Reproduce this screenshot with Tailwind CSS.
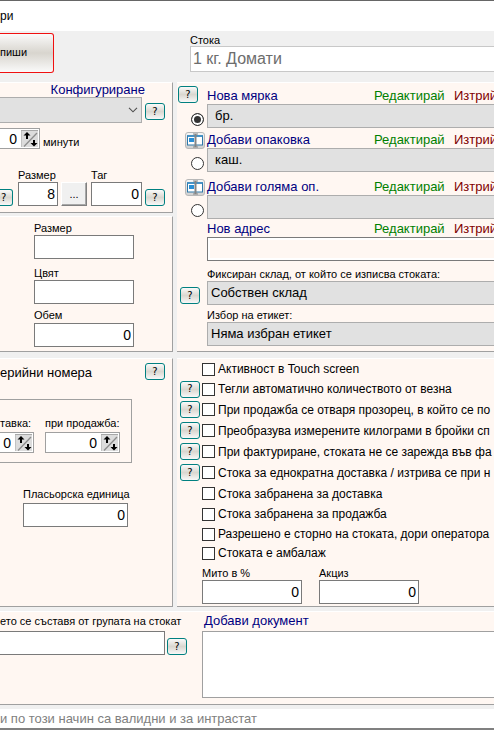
<!DOCTYPE html>
<html lang="bg">
<head>
<meta charset="utf-8">
<title>Стока</title>
<script src="https://cdn.jsdelivr.net/npm/@tailwindcss/browser@4"></script>
</head>
<body class="min-h-screen overflow-x-hidden whitespace-nowrap bg-[#f0f0f0] font-['Liberation_Sans',Arial,sans-serif] text-[13px] leading-4 text-black">
<svg class="hidden">
  <symbol id="rename" viewBox="0 0 20 17">
    <rect x="2.500" y="4" width="15" height="9" fill="#fff" stroke="#2f78a8"/>
    <path d="M2 4h16" stroke="#2f86c0" stroke-width="1.500"/>
    <rect x="4" y="6" width="5" height="4" fill="#2a8fd6"/>
    <path d="M10.500 2v13" stroke="#858585" stroke-width="2"/>
    <path d="M8 2h5M8 15h5" stroke="#858585"/>
  </symbol>
  <symbol id="spin" viewBox="0 0 17 17">
    <rect width="17" height="17" fill="#dcdcdc"/>
    <path d="M0 17V.5h17" fill="none" stroke="#a8a8a8"/>
    <path d="M3 16.500L16 3" stroke="#8c8c8c" stroke-width="1.300"/>
    <path d="M6 2l3.500 3.500H7V9H5V5.500H2.500z" fill="#000"/>
    <path d="M12 10h2v3h2.500L13 16.500 9.500 13H12z" fill="#000"/>
  </symbol>
</svg>

<header class="flex h-[31px] items-center border-t border-[#666] bg-white text-xs"><h1>ри</h1></header>

<div class="flex h-[51px] items-start pt-[2px]">
  <button class="h-10 w-[54px] rounded-r-[3px] border border-l-0 border-[#f01010] bg-linear-to-b from-[#fafafa] via-[#d8d5ce] to-[#fafafa] pb-[2px] text-left text-[11px]">пиши</button>
  <div class="ml-[136px] -mr-2 flex grow flex-col">
    <label for="item" class="h-[13px] text-[11px] leading-[14px]">Стока</label>
    <input id="item" value="1 кг. Домати" class="h-[26px] w-full border border-[#c8c8c8] bg-white pl-[2px] text-base text-[#6d6d6d]">
  </div>
</div>

<main>
  <div class="flex gap-1">
    <div class="flex w-[173px] shrink-0 flex-col">
      <section class="h-[131px] border-t border-r border-b border-t-white border-r-[#a0a0a0] border-b-[#a0a0a0] bg-[#fff7f2]">
        <a href="#" class="block h-[14px] pr-[27px] text-right leading-[14px] text-[#000080]">Конфигуриране</a>
        <div class="flex items-end gap-[3px]">
          <div class="relative h-[26px] w-[142px]">
            <select aria-label="Конфигуриране" class="h-full w-full appearance-none border border-l-0 border-[#adadad] bg-[#e1e1e1]"><option></option></select>
            <svg class="pointer-events-none absolute top-[10px] right-[4px] h-[6px] w-[10px]" viewBox="0 0 10 6"><path d="M1 .8l4 4 4-4" fill="none" stroke="#505050" stroke-width="1.100"/></svg>
          </div>
          <button class="mb-[3px] h-[17px] w-5 rounded-[3px] border border-[#008080] bg-linear-to-b from-[#fafafa] via-[#dad7d0] to-[#f8f8f8] font-['DejaVu_Sans',sans-serif] text-[10px] leading-[14px]">?</button>
        </div>
        <div class="flex items-end gap-[3px] pt-[5px]">
          <div class="flex h-[21px] w-10 items-center border border-l-0 border-[#a0a0a0] bg-white pr-px">
            <input id="minutes" value="0" class="w-0 grow pr-1 text-right text-sm"><svg class="size-[17px]"><use href="#spin"/></svg>
          </div>
          <label for="minutes" class="h-[14px] text-[11px] leading-[14px]">минути</label>
        </div>
        <div class="flex items-end pt-[19px]">
          <button class="h-[17px] w-[13px] rounded-r-[3px] border border-l-0 border-[#008080] bg-linear-to-b from-[#fafafa] via-[#dad7d0] to-[#f8f8f8] pl-px text-left font-['DejaVu_Sans',sans-serif] text-[10px] leading-[14px]">?</button>
          <div class="ml-[5px] flex w-10 flex-col">
            <label for="size1" class="h-[14px] text-[11px] leading-[14px]">Размер</label>
            <input id="size1" value="8" class="h-6 w-full border border-[#7a7a7a] bg-white pr-[2px] text-right text-sm">
          </div>
          <button aria-label="Избор" class="ml-[3px] h-6 w-[26px] border border-t-white border-r-[#808080] border-b-[#808080] border-l-white bg-[#f0f0f0] text-[11px] shadow-[inset_-1px_-1px_0_#a8a8a8]">...</button>
          <div class="ml-1 flex w-[51px] flex-col">
            <label for="tag" class="h-[14px] text-[11px] leading-[14px]">Таг</label>
            <input id="tag" value="0" class="h-6 w-full border border-[#7a7a7a] bg-white pr-[2px] text-right text-sm">
          </div>
          <button class="ml-[3px] h-[17px] w-5 rounded-[3px] border border-[#008080] bg-linear-to-b from-[#fafafa] via-[#dad7d0] to-[#f8f8f8] font-['DejaVu_Sans',sans-serif] text-[10px] leading-[14px]">?</button>
        </div>
      </section>

      <section class="mt-[3px] flex h-[136px] flex-col border-t border-r border-b border-t-white border-r-[#a0a0a0] border-b-[#a0a0a0] bg-[#fff7f2] pt-1 pl-[34px]">
        <label for="size2" class="h-[14px] text-[11px] leading-[14px]">Размер</label>
        <input id="size2" class="h-6 w-[100px] border border-[#7a7a7a] bg-white pr-[2px] text-right text-sm">
        <label for="color" class="mt-[7px] h-[14px] text-[11px] leading-[14px]">Цвят</label>
        <input id="color" class="h-6 w-[100px] border border-[#7a7a7a] bg-white pr-[2px] text-right text-sm">
        <label for="volume" class="mt-1 h-[15px] text-[11px] leading-[14px]">Обем</label>
        <input id="volume" value="0" class="h-6 w-[100px] border border-[#7a7a7a] bg-white pr-[2px] text-right text-sm">
      </section>

      <section class="mt-[6px] h-[249px] border-t border-r border-b border-t-white border-r-[#a0a0a0] border-b-[#a0a0a0] bg-[#fff7f2] pt-1">
        <div class="flex justify-between pr-[7px]">
          <h2 class="pt-[2px]">ерийни номера</h2>
          <button class="h-[17px] w-5 rounded-[3px] border border-[#008080] bg-linear-to-b from-[#fafafa] via-[#dad7d0] to-[#f8f8f8] font-['DejaVu_Sans',sans-serif] text-[10px] leading-[14px]">?</button>
        </div>
        <div class="mt-[18px] flex h-16 w-[132px] gap-[11px] border border-l-0 border-[#a0a0a0] pt-[15px]">
          <div class="flex w-[34px] flex-col">
            <label for="delivery" class="h-[17px] text-[11px] leading-[16px]">тавка:</label>
            <div class="flex h-[21px] items-center border border-l-0 border-[#a0a0a0] bg-white pr-px">
              <input id="delivery" value="0" class="w-0 grow pr-1 text-right text-sm"><svg class="size-[17px]"><use href="#spin"/></svg>
            </div>
          </div>
          <div class="flex w-[75px] flex-col">
            <label for="sale" class="h-[17px] text-[11px] leading-[16px]">при продажба:</label>
            <div class="flex h-[21px] items-center border border-[#a0a0a0] bg-white pr-px">
              <input id="sale" value="0" class="w-0 grow pr-1 text-right text-sm"><svg class="size-[17px]"><use href="#spin"/></svg>
            </div>
          </div>
        </div>
        <div class="mt-6 ml-[23px] flex w-[105px] flex-col">
          <label for="unit" class="h-4 text-[11px] leading-[14px]">Пласьорска единица</label>
          <input id="unit" value="0" class="h-6 w-full border border-[#7a7a7a] bg-white pr-[2px] text-right text-sm">
        </div>
      </section>
    </div>

    <div class="flex min-w-0 grow flex-col overflow-hidden">
      <section class="-mr-2 h-[270px] border-t border-b border-t-white border-b-[#a0a0a0] bg-[#fff7f2] pt-[3px]">
        <div class="flex h-[42px]">
          <div class="w-[30px] shrink-0 pl-px">
            <button class="block h-[17px] w-5 rounded-[3px] border border-[#008080] bg-linear-to-b from-[#fafafa] via-[#dad7d0] to-[#f8f8f8] font-['DejaVu_Sans',sans-serif] text-[10px] leading-[14px]">?</button>
            <input type="radio" name="unit" checked aria-label="Мярка" class="mt-[10px] ml-[13px] block size-[13px] appearance-none rounded-full border border-[#333] bg-white checked:bg-[#333] checked:shadow-[inset_0_0_0_2px_#fff]">
          </div>
          <div class="grow">
            <div class="flex h-[18px] items-center pt-px"><a href="#" class="w-[167px] text-[#000080]">Нова мярка</a><a href="#" class="w-20 text-[#008000]">Редактирай</a><a href="#" class="text-[#800000]">Изтрий</a></div>
            <select aria-label="Мярка" class="block h-6 w-full appearance-none border border-[#adadad] bg-[#e1e1e1] pl-[7px]"><option>бр.</option></select>
          </div>
        </div>
        <div class="mt-[2px] flex h-[42px]">
          <div class="w-[30px] shrink-0 pt-[2px] pl-2">
            <button aria-label="Преименувай опаковка" class="block h-[17px] w-5 rounded-[3px] border border-[#b8b8b8] bg-linear-to-b from-[#f6f6f6] to-[#d0d0d0]"><svg class="-m-px h-[17px] w-5"><use href="#rename"/></svg></button>
            <input type="radio" name="unit" aria-label="Опаковка" class="mt-2 ml-[6px] block size-[13px] appearance-none rounded-full border border-[#333] bg-white checked:bg-[#333] checked:shadow-[inset_0_0_0_2px_#fff]">
          </div>
          <div class="grow">
            <div class="flex h-[18px] items-center pt-px"><a href="#" class="w-[167px] text-[#000080]">Добави опаковка</a><a href="#" class="w-20 text-[#008000]">Редактирай</a><a href="#" class="text-[#800000]">Изтрий</a></div>
            <select aria-label="Опаковка" class="block h-6 w-full appearance-none border border-[#adadad] bg-[#e1e1e1] pl-[7px]"><option>каш.</option></select>
          </div>
        </div>
        <div class="mt-[5px] flex h-[42px]">
          <div class="w-[30px] shrink-0 pt-[2px] pl-2">
            <button aria-label="Преименувай голяма опаковка" class="block h-[17px] w-5 rounded-[3px] border border-[#b8b8b8] bg-linear-to-b from-[#f6f6f6] to-[#d0d0d0]"><svg class="-m-px h-[17px] w-5"><use href="#rename"/></svg></button>
            <input type="radio" name="unit" aria-label="Голяма опаковка" class="mt-2 ml-[6px] block size-[13px] appearance-none rounded-full border border-[#333] bg-white checked:bg-[#333] checked:shadow-[inset_0_0_0_2px_#fff]">
          </div>
          <div class="grow">
            <div class="flex h-[18px] items-center pt-px"><a href="#" class="w-[167px] text-[#000080]">Добави голяма оп.</a><a href="#" class="w-20 text-[#008000]">Редактирай</a><a href="#" class="text-[#800000]">Изтрий</a></div>
            <select aria-label="Голяма опаковка" class="block h-6 w-full appearance-none border border-[#adadad] bg-[#e1e1e1] pl-[7px]"><option></option></select>
          </div>
        </div>
        <div class="h-[42px] pl-[30px]">
          <div class="flex h-[18px] items-center pt-px"><a href="#" class="w-[167px] text-[#000080]">Нов адрес</a><a href="#" class="w-20 text-[#008000]">Редактирай</a><a href="#" class="text-[#800000]">Изтрий</a></div>
          <input aria-label="Адрес" class="block h-6 w-full border border-[#7a7a7a] bg-[#fff7f2] shadow-[inset_0_0_0_2px_#fff]">
        </div>
        <div class="mt-[6px] flex items-end">
          <div class="w-[30px] shrink-0 pb-px pl-[3px]">
            <button class="block h-[17px] w-5 rounded-[3px] border border-[#008080] bg-linear-to-b from-[#fafafa] via-[#dad7d0] to-[#f8f8f8] font-['DejaVu_Sans',sans-serif] text-[10px] leading-[14px]">?</button>
          </div>
          <div class="flex grow flex-col">
            <label for="store" class="h-[14px] text-[11px] leading-[14px]">Фиксиран склад, от който се изписва стоката:</label>
            <select id="store" class="h-6 w-full appearance-none border border-[#adadad] bg-[#e1e1e1] pl-[3px]"><option>Собствен склад</option></select>
          </div>
        </div>
        <div class="mt-[3px] flex flex-col pl-[30px]">
          <label for="etiket" class="h-[14px] text-[11px] leading-[14px]">Избор на етикет:</label>
          <select id="etiket" class="h-6 w-full appearance-none border border-[#adadad] bg-[#e1e1e1] pl-[3px]"><option>Няма избран етикет</option></select>
        </div>
      </section>

      <section class="mt-[6px] h-[249px] border-t border-b border-t-white border-b-[#a0a0a0] bg-[#fff7f2] pl-[3px] text-xs">
        <div class="flex h-5 items-center pl-[22px]">
          <label class="flex items-center gap-[3px]"><input type="checkbox" class="size-[13px] appearance-none border border-[#333] bg-white checked:bg-[#333]">Активност в Touch screen</label>
        </div>
        <div class="flex h-5 items-center gap-[2px]">
          <button class="h-[17px] w-5 shrink-0 rounded-[3px] border border-[#008080] bg-linear-to-b from-[#fafafa] via-[#dad7d0] to-[#f8f8f8] font-['DejaVu_Sans',sans-serif] text-[10px] leading-[14px]">?</button>
          <label class="flex items-center gap-[3px]"><input type="checkbox" class="size-[13px] appearance-none border border-[#333] bg-white checked:bg-[#333]">Тегли автоматично количеството от везна</label>
        </div>
        <div class="flex h-[21px] items-center gap-[2px]">
          <button class="h-[17px] w-5 shrink-0 rounded-[3px] border border-[#008080] bg-linear-to-b from-[#fafafa] via-[#dad7d0] to-[#f8f8f8] font-['DejaVu_Sans',sans-serif] text-[10px] leading-[14px]">?</button>
          <label class="flex items-center gap-[3px]"><input type="checkbox" class="size-[13px] appearance-none border border-[#333] bg-white checked:bg-[#333]">При продажба се отваря прозорец, в който се по</label>
        </div>
        <div class="flex h-[21px] items-center gap-[2px]">
          <button class="h-[17px] w-5 shrink-0 rounded-[3px] border border-[#008080] bg-linear-to-b from-[#fafafa] via-[#dad7d0] to-[#f8f8f8] font-['DejaVu_Sans',sans-serif] text-[10px] leading-[14px]">?</button>
          <label class="flex items-center gap-[3px]"><input type="checkbox" class="size-[13px] appearance-none border border-[#333] bg-white checked:bg-[#333]">Преобразува измерените килограми в бройки сп</label>
        </div>
        <div class="flex h-[21px] items-center gap-[2px]">
          <button class="h-[17px] w-5 shrink-0 rounded-[3px] border border-[#008080] bg-linear-to-b from-[#fafafa] via-[#dad7d0] to-[#f8f8f8] font-['DejaVu_Sans',sans-serif] text-[10px] leading-[14px]">?</button>
          <label class="flex items-center gap-[3px]"><input type="checkbox" class="size-[13px] appearance-none border border-[#333] bg-white checked:bg-[#333]">При фактуриране, стоката не се зарежда във фа</label>
        </div>
        <div class="flex h-[21px] items-center gap-[2px]">
          <button class="h-[17px] w-5 shrink-0 rounded-[3px] border border-[#008080] bg-linear-to-b from-[#fafafa] via-[#dad7d0] to-[#f8f8f8] font-['DejaVu_Sans',sans-serif] text-[10px] leading-[14px]">?</button>
          <label class="flex items-center gap-[3px]"><input type="checkbox" class="size-[13px] appearance-none border border-[#333] bg-white checked:bg-[#333]">Стока за еднократна доставка / изтрива се при н</label>
        </div>
        <div class="flex h-[21px] items-center pl-[22px]">
          <label class="flex items-center gap-[3px]"><input type="checkbox" class="size-[13px] appearance-none border border-[#333] bg-white checked:bg-[#333]">Стока забранена за доставка</label>
        </div>
        <div class="flex h-5 items-center pl-[22px]">
          <label class="flex items-center gap-[3px]"><input type="checkbox" class="size-[13px] appearance-none border border-[#333] bg-white checked:bg-[#333]">Стока забранена за продажба</label>
        </div>
        <div class="flex h-5 items-center pl-[22px]">
          <label class="flex items-center gap-[3px]"><input type="checkbox" class="size-[13px] appearance-none border border-[#333] bg-white checked:bg-[#333]">Разрешено е сторно на стоката, дори оператора</label>
        </div>
        <div class="flex h-[18px] items-center pl-[22px]">
          <label class="flex items-center gap-[3px]"><input type="checkbox" class="size-[13px] appearance-none border border-[#333] bg-white checked:bg-[#333]">Стоката е амбалаж</label>
        </div>
        <div class="flex gap-[17px] pt-1 pl-[22px]">
          <div class="flex w-[100px] flex-col">
            <label for="duty" class="h-[14px] text-[11px] leading-[14px]">Мито в %</label>
            <input id="duty" value="0" class="h-6 w-full border border-[#7a7a7a] bg-white pr-[2px] text-right text-sm">
          </div>
          <div class="flex w-[100px] flex-col">
            <label for="excise" class="h-[14px] text-[11px] leading-[14px]">Акциз</label>
            <input id="excise" value="0" class="h-6 w-full border border-[#7a7a7a] bg-white pr-[2px] text-right text-sm">
          </div>
        </div>
      </section>
    </div>
  </div>

  <section class="mt-1 flex h-[94px] border-t border-b border-t-white border-b-[#a0a0a0] bg-[#fff7f2]">
    <div class="flex w-[202px] shrink-0 flex-col">
      <label for="group" class="h-[19px] text-[11px] leading-[18px]">ето се съставя от групата на стокат</label>
      <div class="flex items-end gap-[2px]">
        <input id="group" class="h-6 w-[165px] border border-l-0 border-[#7a7a7a] bg-white">
        <button class="h-[17px] w-5 rounded-[3px] border border-[#008080] bg-linear-to-b from-[#fafafa] via-[#dad7d0] to-[#f8f8f8] font-['DejaVu_Sans',sans-serif] text-[10px] leading-[14px]">?</button>
      </div>
    </div>
    <div class="-mr-2 flex grow flex-col">
      <a href="#" class="h-[19px] pl-[2px] leading-[18px] text-[#000080]">Добави документ</a>
      <textarea aria-label="Документи" class="h-[67px] w-full resize-none border border-[#a0a0a0] bg-white"></textarea>
    </div>
  </section>
</main>

<footer class="mt-1 flex h-[21px] items-center border-b-2 border-[#808080] bg-white text-[#808080]">и по този начин са валидни и за интрастат</footer>
</body>
</html>
